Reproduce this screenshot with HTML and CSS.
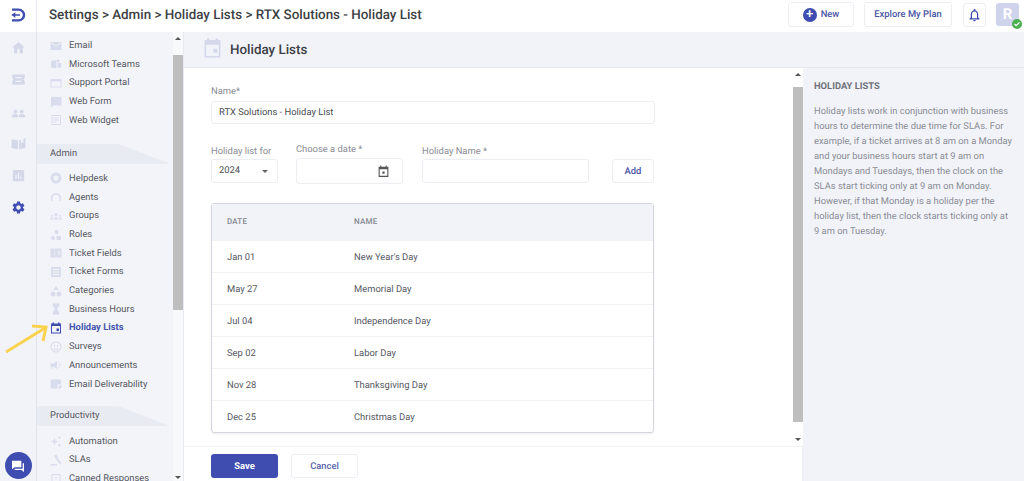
FILE: index.html
```html
<!DOCTYPE html>
<html lang="en">
<head>
  <meta charset="UTF-8">
  <meta name="viewport" content="width=device-width, initial-scale=1.0">
  <title>Holiday Lists</title>
  <link rel="stylesheet" href="styles.css">
</head>
<body>
  <header class="topbar">
    <div class="logo-cell">
      <svg class="logo" viewBox="0 0 24 24"><path d="M3 4h10a8 8 0 0 1 0 16H3" fill="none" stroke="#3f4db0" stroke-width="3.6"/><path d="M2 12l6-4v3h7v2H8v3z" fill="#3f4db0"/></svg>
    </div>
    <div class="crumbs">Settings &gt; Admin &gt; Holiday Lists &gt; RTX Solutions - Holiday List</div>
    <div class="top-actions">
      <button class="top-btn new-btn"><span class="plus">+</span>New</button>
      <button class="top-btn plan-btn">Explore My Plan</button>
      <button class="bell-btn">
        <svg viewBox="0 0 24 24"><path fill="#3f4db0" d="M12 22c1.1 0 2-.9 2-2h-4c0 1.1.9 2 2 2zm6-6v-5c0-3.07-1.63-5.64-4.5-6.32V4c0-.83-.67-1.5-1.5-1.5s-1.5.67-1.5 1.5v.68C7.64 5.36 6 7.92 6 11v5l-2 2v1h16v-1l-2-2zm-2 1H8v-6c0-2.48 1.51-4.5 4-4.5s4 2.02 4 4.5v6z"/></svg>
      </button>
      <div class="avatar">R<span class="online"><svg viewBox="0 0 24 24"><path d="M6 12l4 4 8-8" fill="none" stroke="#fff" stroke-width="3"/></svg></span></div>
    </div>
  </header>

  <div class="below">
    <nav class="rail">
      <svg class="rail-icon" viewBox="0 0 24 24"><path d="M10 21v-7h4v7h5v-9h3L12 3 2 12h3v9z"/></svg>
      <svg class="rail-icon" viewBox="0 0 24 24"><path fill-rule="evenodd" d="M2 4h20v6a2 2 0 0 0 0 4v6H2v-6a2 2 0 0 0 0-4zM7 8v2h10V8zm0 6v2h10v-2z"/></svg>
      <svg class="rail-icon" viewBox="0 0 24 24"><circle cx="7" cy="12" r="3"/><circle cx="17" cy="12" r="3"/><path d="M1 21c0-3 3-5 6-5s4.5 2 4.5 5zM12.5 21c0-3 1.5-5 4.5-5s6 2 6 5z"/></svg>
      <svg class="rail-icon" viewBox="0 0 24 24"><path d="M1 5l10 2v14L1 19zM13 7l3-1v6l3-2 1 1V4l3-1v16l-10 2z"/></svg>
      <svg class="rail-icon" viewBox="0 0 24 24"><path d="M3 3h18v18H3zM7 17h2v-6H7zm4 0h2V8h-2zm4 0h2v-3h-2z" fill-rule="evenodd"/></svg>
      <svg class="rail-icon rail-active" viewBox="0 0 24 24"><path d="M19.14 12.94c.04-.3.06-.61.06-.94 0-.32-.02-.64-.07-.94l2.03-1.58c.18-.14.23-.41.12-.61l-1.92-3.32c-.12-.22-.37-.29-.59-.22l-2.39.96c-.5-.38-1.03-.7-1.62-.94l-.36-2.54c-.04-.24-.24-.41-.48-.41h-3.84c-.24 0-.43.17-.47.41l-.36 2.54c-.59.24-1.13.57-1.62.94l-2.39-.96c-.22-.08-.47 0-.59.22L2.74 8.87c-.12.21-.08.47.12.61l2.03 1.58c-.05.3-.09.63-.09.94s.02.64.07.94l-2.03 1.58c-.18.14-.23.41-.12.61l1.92 3.32c.12.22.37.29.59.22l2.39-.96c.5.38 1.03.7 1.62.94l.36 2.54c.05.24.24.41.48.41h3.84c.24 0 .44-.17.47-.41l.36-2.54c.59-.24 1.13-.56 1.62-.94l2.39.96c.22.08.47 0 .59-.22l1.92-3.32c.12-.22.07-.47-.12-.61l-2.01-1.58zM12 15.6c-1.98 0-3.6-1.62-3.6-3.6s1.62-3.6 3.6-3.6 3.6 1.62 3.6 3.6-1.62 3.6-3.6 3.6z"/></svg>
      <div class="chat-bubble">
        <svg viewBox="0 0 24 24"><path fill="#fff" d="M3 4h14v10H7l-4 3zM19 8h2v13l-4-3H7v-2h12z"/></svg>
      </div>
    </nav>

    <aside class="sidebar">
      <div class="side-list">
        <a class="side-item"><svg viewBox="0 0 24 24"><path d="M1 4h22v16H1z"/><path d="M2 6l10 6 10-6" fill="none" stroke="#f3f4f9" stroke-width="2"/></svg>Email</a>
        <a class="side-item"><svg viewBox="0 0 24 24"><circle cx="16" cy="6" r="3"/><path d="M2 6l11-2v17L2 19zM15 10h8v6a4 4 0 0 1-8 0z"/></svg>Microsoft Teams</a>
        <a class="side-item"><svg viewBox="0 0 24 24"><path fill-rule="evenodd" d="M1 4h22v17H1zM3 9v10h18V9z"/></svg>Support Portal</a>
        <a class="side-item"><svg viewBox="0 0 24 24"><path d="M2 2h21v17H7l-5 4z"/></svg>Web Form</a>
        <a class="side-item"><svg viewBox="0 0 24 24"><path fill-rule="evenodd" d="M3 2h19v20H3zM5 4v16h15V4zM7 7h11v2H7zm0 4h11v2H7zm0 4h6v2H7z"/></svg>Web Widget</a>

        <div class="side-head first-head">Admin</div>
        <a class="side-item"><svg viewBox="0 0 24 24"><path fill-rule="evenodd" d="M12 1a11 11 0 1 0 0 22 11 11 0 0 0 0-22zm0 6a5 5 0 1 1 0 10 5 5 0 0 1 0-10z"/></svg>Helpdesk</a>
        <a class="side-item"><svg viewBox="0 0 24 24"><path d="M2 14a10 10 0 0 1 20 0v6h-3v-6a7 7 0 0 0-14 0v6H2z"/></svg>Agents</a>
        <a class="side-item"><svg viewBox="0 0 24 24"><circle cx="12" cy="9" r="3"/><circle cx="4" cy="12" r="2"/><circle cx="20" cy="12" r="2"/><path d="M7 19c0-3 2-5 5-5s5 2 5 5zM0 19c0-2 2-4 4-4l2 1-1 3zM24 19c0-2-2-4-4-4l-2 1 1 3z"/></svg>Groups</a>
        <a class="side-item"><svg viewBox="0 0 24 24"><circle cx="13" cy="6" r="4"/><circle cx="6" cy="18" r="4"/><path d="M13 14h9v8h-9z"/></svg>Roles</a>
        <a class="side-item"><svg viewBox="0 0 24 24"><path fill-rule="evenodd" d="M1 3h22v18H1zM8 5v14h1V5zm7 4v2h6V9zm0 4v2h6v-2z"/></svg>Ticket Fields</a>
        <a class="side-item"><svg viewBox="0 0 24 24"><path fill-rule="evenodd" d="M2 2h20v20H2zM5 6v2h14V6zm0 5v2h14v-2zm0 5v2h14v-2z"/></svg>Ticket Forms</a>
        <a class="side-item"><svg viewBox="0 0 24 24"><path d="M12 2l5 8H7z"/><circle cx="6" cy="18" r="5"/><circle cx="18" cy="18" r="5"/></svg>Categories</a>
        <a class="side-item"><svg viewBox="0 0 24 24"><path d="M5 1h14v3h-1c0 4-3 6-4 8 1 2 4 4 4 8h1v3H5v-3h1c0-4 3-6 4-8-1-2-4-4-4-8H5z"/></svg>Business Hours</a>
        <a class="side-item side-active"><svg viewBox="0 0 24 24"><path fill="#3f4db0" fill-rule="evenodd" d="M5 1h3v2h8V1h3v2h3v20H2V3h3zM4 8v13h16V8zm9 5h5v5h-5z"/></svg>Holiday Lists</a>
        <a class="side-item"><svg viewBox="0 0 24 24"><path fill-rule="evenodd" d="M12 1a11 11 0 1 0 0 22 11 11 0 0 0 0-22zm0 2a9 9 0 1 1 0 18 9 9 0 0 1 0-18zM8 8h2v3H8zm6 0h2v3h-2zM7 14h2a3 3 0 0 0 6 0h2a5 5 0 0 1-10 0z"/></svg>Surveys</a>
        <a class="side-item"><svg viewBox="0 0 24 24"><path d="M1 9h6l7-5v16l-7-5H5v5H3v-5H1zM17 6h2v2h-2zm0 5h5v2h-5zm0 5h2v2h-2z"/></svg>Announcements</a>
        <a class="side-item"><svg viewBox="0 0 24 24"><path d="M1 3h21v10h-7v8H1z"/><path d="M17 15l2 2 4-4v6l-4 3-2-2z"/></svg>Email Deliverability</a>

        <div class="side-head second-head">Productivity</div>
        <a class="side-item"><svg viewBox="0 0 24 24"><path d="M9 5l2 6 6 2-6 2-2 6-2-6-6-2 6-2zM19 1l1 3 3 1-3 1-1 3-1-3-3-1 3-1zM19 16l1 3 3 1-3 1-1 3-1-3-3-1 3-1z"/></svg>Automation</a>
        <a class="side-item"><svg viewBox="0 0 24 24"><path d="M8 3l5-2 3 6-5 2zM11 10l4-2 8 11-2 2zM1 20h13v3H1z"/></svg>SLAs</a>
        <a class="side-item"><svg viewBox="0 0 24 24"><path fill-rule="evenodd" d="M3 2h18v20H3zM5 4v16h14V4zM11 8h2v5h-2z"/></svg>Canned Responses</a>
      </div>
      <div class="scrollbar side-scroll">
        <span class="arrow-up"></span>
        <span class="thumb"></span>
        <span class="arrow-down"></span>
      </div>
    </aside>

    <main class="main">
      <div class="page-head">
        <svg class="page-icon" viewBox="0 0 24 24"><path fill="#d5d8ea" fill-rule="evenodd" d="M5 0h3v2h8V0h3v2h3v22H2V2h3zM4 8v14h16V8zm9 5h5v5h-5z"/></svg>
        <h1>Holiday Lists</h1>
      </div>

      <div class="work">
        <div class="left-col">
          <div class="form-scroll">
            <form class="form">
              <label class="field-label name-label">Name*</label>
              <div class="input name-input">RTX Solutions - Holiday List</div>

              <div class="holiday-row">
                <div class="col-year">
                  <label class="field-label">Holiday list for</label>
                  <div class="input select-box">2024<span class="caret"></span></div>
                </div>
                <div class="col-date">
                  <label class="field-label">Choose a date *</label>
                  <div class="input date-box">
                    <svg viewBox="0 0 24 24"><path fill="#555" fill-rule="evenodd" d="M6 1h2v2h8V1h2v2h3v19H3V3h3zM5 8v12h14V8zm5 4h4v4h-4z"/></svg>
                  </div>
                </div>
                <div class="col-name">
                  <label class="field-label">Holiday Name *</label>
                  <div class="input"></div>
                </div>
                <button type="button" class="add-btn">Add</button>
              </div>

              <table class="holiday-table">
                <thead>
                  <tr><th class="date-col">DATE</th><th>NAME</th></tr>
                </thead>
                <tbody>
                  <tr><td>Jan 01</td><td>New Year's Day</td></tr>
                  <tr><td>May 27</td><td>Memorial Day</td></tr>
                  <tr><td>Jul 04</td><td>Independence Day</td></tr>
                  <tr><td>Sep 02</td><td>Labor Day</td></tr>
                  <tr><td>Nov 28</td><td>Thanksgiving Day</td></tr>
                  <tr><td>Dec 25</td><td>Christmas Day</td></tr>
                </tbody>
              </table>
            </form>
            <div class="scrollbar form-scrollbar">
              <span class="arrow-up"></span>
              <span class="thumb"></span>
              <span class="arrow-down"></span>
            </div>
          </div>
          <div class="form-footer">
            <button class="save-btn">Save</button>
            <button class="cancel-btn">Cancel</button>
          </div>
        </div>

        <section class="help">
          <h2>HOLIDAY LISTS</h2>
          <p>Holiday lists work in conjunction with business hours to determine the due time for SLAs. For example, if a ticket arrives at 8 am on a Monday and your business hours start at 9 am on Mondays and Tuesdays, then the clock on the SLAs start ticking only at 9 am on Monday. However, if that Monday is a holiday per the holiday list, then the clock starts ticking only at 9 am on Tuesday.</p>
        </section>
      </div>
    </main>
  </div>

  <!-- annotation drawn on top of the screenshot -->
  <svg class="yellow-arrow" viewBox="0 0 48 34"><path d="M4 31L43 7M30 5l14 1-3 14" fill="none" stroke="#f9d24f" stroke-width="3"/></svg>
</body>
</html>
```

FILE: styles.css
```css
* {
  box-sizing: border-box;
}

body {
  margin: 0;
  height: 481px;
  overflow: hidden;
  display: flex;
  flex-direction: column;
  font-family: Roboto, "Liberation Sans", sans-serif;
  font-size: 9.4px;
  text-rendering: geometricPrecision;
  color: #4f5159;
  background-color: #fff;
}

button {
  font-family: inherit;
  text-rendering: geometricPrecision;
  cursor: pointer;
}

/* top bar */
.topbar {
  height: 32px;
  flex-shrink: 0;
  display: flex;
  align-items: center;
  background-color: #fff;
}

.logo-cell {
  width: 37px;
  height: 32px;
  display: flex;
  align-items: center;
  justify-content: center;
  border-right: 1px solid #e6e8f0;
}

.logo {
  width: 16px;
  height: 16px;
  margin-top: -3px;
}

.crumbs {
  margin: -1px 0 0 12px;
  font-size: 13.4px;
  font-weight: 500;
  color: #3d3f45;
}

.top-actions {
  margin-left: auto;
  margin-right: 5px;
  margin-top: -3px;
  display: flex;
  align-items: center;
}

.top-btn {
  height: 25px;
  background-color: #fff;
  border: 1px solid #eceef4;
  border-radius: 3px;
  color: #4a55a5;
  font-size: 9.4px;
  font-weight: 500;
  display: flex;
  align-items: center;
  justify-content: center;
  padding: 0;
}

.new-btn {
  width: 66px;
}

.plan-btn {
  width: 88px;
  margin-left: 10px;
}

.plus {
  width: 14px;
  height: 14px;
  margin-right: 4px;
  border-radius: 50%;
  background-color: #3f4db0;
  color: #fff;
  font-size: 13px;
  line-height: 13px;
  text-align: center;
}

.bell-btn {
  width: 23px;
  height: 24px;
  margin-left: 11px;
  padding: 3px;
  background-color: #fff;
  border: 1px solid #eceef4;
  border-radius: 3px;
}

.bell-btn svg {
  width: 15px;
  height: 16px;
  display: block;
}

.avatar {
  position: relative;
  width: 23px;
  height: 23px;
  margin-left: 10px;
  border-radius: 3px;
  background-color: #cfd3ec;
  color: #fff;
  font-size: 15px;
  font-weight: 700;
  line-height: 23px;
  text-align: center;
}

.online {
  position: absolute;
  right: -3px;
  bottom: -3px;
  width: 10px;
  height: 10px;
  border-radius: 50%;
  background-color: #4caf50;
}

.online svg {
  display: block;
  width: 10px;
  height: 10px;
}

/* layout below the top bar */
.below {
  flex: 1;
  min-height: 0;
  display: flex;
}

.rail {
  width: 37px;
  flex-shrink: 0;
  display: flex;
  flex-direction: column;
  align-items: center;
  padding-top: 8px;
  background-color: #f1f3f9;
  border-right: 1px solid #e2e4ec;
}

.rail-icon {
  width: 15px;
  height: 15px;
  margin-bottom: 17px;
  fill: #d3d7e8;
}

.rail-active {
  fill: #3f4db0;
}

.chat-bubble {
  margin-top: auto;
  margin-bottom: 2px;
  width: 27px;
  height: 27px;
  border-radius: 50%;
  background-color: #3f4db0;
  display: flex;
  align-items: center;
  justify-content: center;
}

.chat-bubble svg {
  width: 16px;
  height: 16px;
}

/* settings sidebar */
.sidebar {
  width: 147px;
  flex-shrink: 0;
  display: flex;
  background-color: #f3f4f9;
  border-right: 1px solid #e8eaf1;
}

.side-list {
  width: 136px;
  padding-top: 4.2px;
  overflow: hidden;
}

.side-item {
  height: 18.7px;
  display: flex;
  align-items: center;
  padding-left: 13px;
  white-space: nowrap;
  color: #55575f;
}

.side-item svg {
  width: 12px;
  height: 12px;
  margin-right: 7px;
  flex-shrink: 0;
  fill: #d9dcec;
}

.side-active {
  font-weight: 700;
  color: #4655ad;
}

.side-head {
  height: 20px;
  padding-left: 13px;
  line-height: 20px;
  color: #55575f;
  background-color: #e9ebf3;
  clip-path: polygon(0 0, 81px 0, 133px 100%, 0 100%);
}

.first-head {
  margin: 14px 0 5.5px;
}

.second-head {
  margin: 12.5px 0 6px;
}

.scrollbar {
  width: 10px;
  flex-shrink: 0;
  display: flex;
  flex-direction: column;
  align-items: center;
}

.side-scroll {
  background-color: #f8f9fb;
  padding: 5px 0 2px;
}

.side-scroll .thumb {
  height: 255px;
  margin-top: 15px;
}

.form-scrollbar {
  background-color: #fff;
  padding: 5px 0 5px;
}

.form-scrollbar .thumb {
  height: 335px;
  margin-top: 11px;
}

.thumb {
  width: 10px;
  background-color: #bebebe;
}

.arrow-up {
  width: 0;
  height: 0;
  border-left: 3px solid transparent;
  border-right: 3px solid transparent;
  border-bottom: 3px solid #555;
}

.arrow-down {
  margin-top: auto;
  width: 0;
  height: 0;
  border-left: 3px solid transparent;
  border-right: 3px solid transparent;
  border-top: 3px solid #555;
}

/* main area */
.main {
  flex: 1;
  min-width: 0;
  display: flex;
  flex-direction: column;
}

.page-head {
  height: 36px;
  flex-shrink: 0;
  display: flex;
  align-items: center;
  padding-left: 19px;
  background-color: #f1f3f9;
  border-bottom: 1px solid #e6e8f0;
}

.page-icon {
  width: 19px;
  height: 20px;
  margin-top: -4px;
}

.page-head h1 {
  margin: 2px 0 0 8px;
  font-size: 13.4px;
  font-weight: 500;
  color: #3d3f45;
}

.work {
  flex: 1;
  min-height: 0;
  display: flex;
}

.left-col {
  width: 619px;
  flex-shrink: 0;
  display: flex;
  flex-direction: column;
}

.form-scroll {
  flex: 1;
  min-height: 0;
  display: flex;
}

.form {
  width: 609px;
  padding: 17px 138px 0 27px;
}

.field-label {
  display: block;
  height: 14px;
  line-height: 13px;
  white-space: nowrap;
  color: #8a8c94;
}

.name-label {
  height: 16px;
}

.col-date .field-label {
  height: 15px;
}

.input {
  height: 24px;
  padding-left: 7px;
  line-height: 22px;
  background-color: #fff;
  border: 1px solid #eceef3;
  border-radius: 3px;
  color: #4a4c52;
}

.name-input {
  height: 23px;
  line-height: 21px;
}

.holiday-row {
  margin-top: 19px;
  display: flex;
  align-items: flex-end;
}

.col-year {
  width: 67px;
}

.col-date {
  width: 107px;
  margin-left: 18px;
}

.col-name {
  width: 167px;
  margin-left: 19px;
}

.select-box {
  display: flex;
  align-items: center;
  justify-content: space-between;
  padding-right: 9px;
}

.caret {
  width: 0;
  height: 0;
  border-left: 3px solid transparent;
  border-right: 3px solid transparent;
  border-top: 3px solid #666;
}

.date-box {
  height: 26px;
  margin-bottom: -1px;
  display: flex;
  align-items: center;
  justify-content: flex-end;
  padding-right: 12px;
}

.date-box svg {
  width: 13px;
  height: 13px;
}

.add-btn {
  width: 42px;
  height: 24px;
  margin-left: 23px;
  padding: 0;
  background-color: #fff;
  border: 1px solid #eceef3;
  border-radius: 3px;
  font-size: 9.4px;
  font-weight: 500;
  color: #4a55a5;
}

.holiday-table {
  width: 443px;
  margin-top: 20px;
  border-collapse: separate;
  border-spacing: 0;
  border: 1px solid #d3d6df;
  border-radius: 3px;
  box-shadow: 0 1px 2px rgba(0, 0, 0, 0.08);
}

.holiday-table th {
  height: 36px;
  padding: 0 0 1px 15px;
  text-align: left;
  font-size: 8px;
  font-weight: 500;
  letter-spacing: 0.2px;
  color: #85878f;
  background-color: #f1f3f9;
}

.holiday-table .date-col {
  width: 127px;
}

.holiday-table td {
  height: 32px;
  padding: 1px 0 0 15px;
  color: #55575f;
  border-top: 1px solid #f0f1f5;
}

.form-footer {
  height: 35px;
  flex-shrink: 0;
  display: flex;
  gap: 13px;
  padding: 7px 0 0 27px;
  border-top: 1px solid #eff0f4;
  border-right: 1px solid #eff0f4;
}

.save-btn {
  width: 67px;
  height: 24px;
  background-color: #3f4db0;
  border: none;
  border-radius: 3px;
  color: #fff;
  font-size: 9.4px;
  font-weight: 700;
}

.cancel-btn {
  width: 67px;
  height: 24px;
  background-color: #fff;
  border: 1px solid #eceef3;
  border-radius: 3px;
  color: #5a64ad;
  font-size: 9.4px;
  font-weight: 500;
}

/* help panel */
.help {
  flex: 1;
  padding: 13px 10px 0 11px;
  background-color: #f1f3f9;
  color: #8a8c94;
}

.help h2 {
  margin: 0;
  font-size: 9.4px;
  font-weight: 700;
  line-height: 12px;
  color: #6e7078;
}

.help p {
  margin: 11px 0 0;
  line-height: 15px;
}

.yellow-arrow {
  position: absolute;
  left: 2px;
  top: 321px;
  width: 48px;
  height: 34px;
}
```
